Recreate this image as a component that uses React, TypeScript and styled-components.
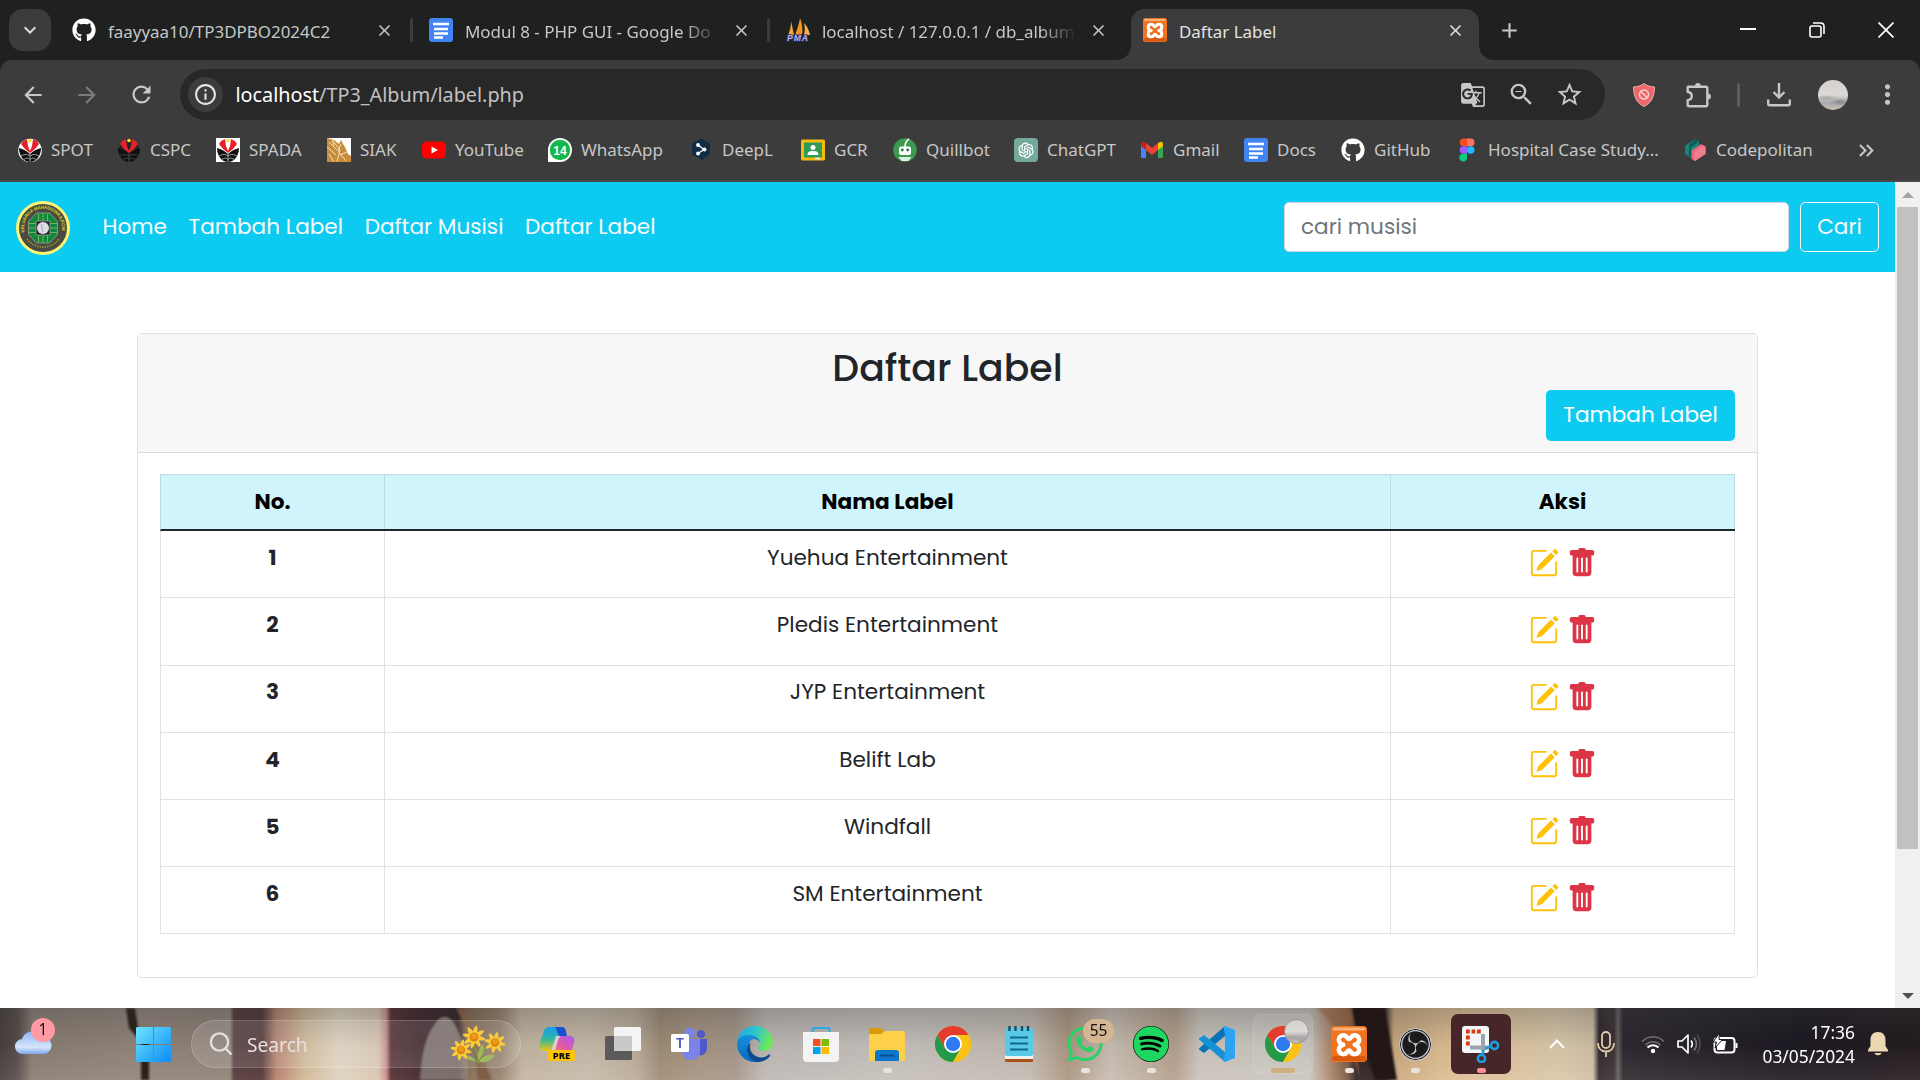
import React from 'react';
import styled, { createGlobalStyle, css } from 'styled-components';
import {
  MdAdd,
  MdArrowBack,
  MdArrowForward,
  MdClose,
  MdGTranslate,
  MdInfoOutline,
  MdKeyboardArrowDown,
  MdKeyboardDoubleArrowRight,
  MdMoreVert,
  MdOutlineZoomOut,
  MdRefresh,
  MdStarOutline,
} from 'react-icons/md';
import { FaGithub, FaWhatsapp, FaSpotify } from 'react-icons/fa';
import { BsPencilSquare, BsTrashFill } from 'react-icons/bs';
import { SiObsstudio } from 'react-icons/si';
import { AiOutlineOpenAI } from 'react-icons/ai';

const UI_FONT = '"Noto Sans", "Open Sans", sans-serif';
const PAGE_FONT = 'Poppins, Inter, sans-serif';

const GlobalStyle = createGlobalStyle`
  * { box-sizing: border-box; }
  body { margin: 0; background: #fff; font-family: ${UI_FONT}; overflow: hidden; }
  svg { display: block; flex: none; }
`;

const Screen = styled.div`
  width: 1920px;
  height: 1080px;
  display: flex;
  flex-direction: column;
  overflow: hidden;
`;

/* ---------- browser chrome ---------- */

const TabStrip = styled.header`
  height: 60px;
  flex: none;
  display: flex;
  align-items: center;
  background: #1f2120;
`;

const TabSearch = styled.button`
  width: 42px;
  height: 42px;
  margin: 0 9px;
  padding: 0;
  border: 0;
  border-radius: 14px;
  background: #3c3c3c;
  color: #dcdcdc;
  display: grid;
  place-items: center;
`;

const Tab = styled.div<{ $active?: boolean }>`
  width: ${(p) => (p.$active ? 348 : 357)}px;
  height: 51px;
  flex: none;
  margin-top: 9px;
  padding: 0 0 9px 12px;
  display: flex;
  align-items: center;
  position: relative;
  font-size: 16.95px;
  color: ${(p) => (p.$active ? '#e3e3e3' : '#c7c7c7')};
  ${(p) =>
    p.$active &&
    css`
      background: #3c3c3c;
      border-radius: 14px 14px 0 0;
      &::before,
      &::after {
        content: '';
        position: absolute;
        bottom: 0;
        width: 14px;
        height: 14px;
      }
      &::before {
        left: -14px;
        background: radial-gradient(circle at 0 0, transparent 13.5px, #3c3c3c 14px);
      }
      &::after {
        right: -14px;
        background: radial-gradient(circle at 100% 0, transparent 13.5px, #3c3c3c 14px);
      }
    `}
`;

const TabTitle = styled.span<{ $fade?: boolean }>`
  width: 252px;
  flex: none;
  margin-left: 12px;
  padding-top: 2px;
  overflow: hidden;
  white-space: nowrap;
  ${(p) =>
    p.$fade &&
    css`
      mask-image: linear-gradient(90deg, #000 218px, transparent 254px);
    `}
`;

const TabClose = styled.span`
  width: 48px;
  flex: none;
  display: grid;
  place-items: center;
`;

const TabDivider = styled.span`
  width: 3px;
  height: 24px;
  margin-left: 2px;
  border-radius: 2px;
  background: #3c3c3c;
`;

const NewTab = styled.span`
  width: 60px;
  display: grid;
  place-items: center;
  color: #c7c7c7;
`;

const WindowControls = styled.div`
  display: flex;
  margin-left: auto;
  color: #fff;
`;

const WindowButton = styled.span`
  width: 69px;
  height: 60px;
  display: grid;
  place-items: center;
`;

const ToolbarBack = styled.div`
  background: #1f2120;
  flex: none;
`;

const Toolbar = styled.div`
  height: 60px;
  padding: 9px 0 0 6px;
  display: flex;
  align-items: flex-start;
  background: #3c3c3c;
  border-radius: 12px 12px 0 0;
  color: #c7c7c7;
`;

const ToolButton = styled.span<{ $w: number; $dim?: boolean }>`
  width: ${(p) => p.$w}px;
  height: 51px;
  display: grid;
  place-items: center;
  flex: none;
  color: ${(p) => (p.$dim ? '#7b7b7b' : 'inherit')};
`;

const Omnibox = styled.div`
  width: 1425px;
  height: 51px;
  flex: none;
  margin-left: 12px;
  padding: 0 12px 0 8px;
  border-radius: 26px;
  background: #282828;
  display: flex;
  align-items: center;
`;

const SiteInfo = styled.span`
  width: 35px;
  height: 35px;
  border-radius: 50%;
  background: #3c3c3c;
  display: grid;
  place-items: center;
`;

const Url = styled.span`
  flex: 1;
  margin-left: 12.5px;
  font-size: 19.8px;
  color: #c2c2c2;
  b {
    font-weight: 400;
    color: #fff;
  }
`;

const ToolDivider = styled.span`
  width: 3px;
  height: 24px;
  flex: none;
  margin: 14px 0 0 22px;
  border-radius: 2px;
  background: #5c5c5c;
`;

const Bookmarks = styled.nav`
  height: 62px;
  padding-left: 18px;
  display: flex;
  align-items: center;
  background: #3c3c3c;
  border-bottom: 2px solid #484848;
  color: #c7c7c7;
  font-size: 17px;
`;

const Bookmark = styled.div<{ $w: number }>`
  width: ${(p) => p.$w}px;
  display: flex;
  align-items: center;
  gap: 9px;
  white-space: nowrap;
  flex: none;
`;

const BookmarkLabel = styled.span`
  padding-bottom: 2px;
`;

/* ---------- page ---------- */

const Viewport = styled.main`
  height: 826px;
  flex: none;
  display: flex;
  background: #fff;
`;

const Page = styled.div`
  width: 1895px;
  font-family: ${PAGE_FONT};
  font-size: 21.6px;
  color: #212529;
`;

const Navbar = styled.div`
  height: 90px;
  padding: 0 16px;
  display: flex;
  align-items: center;
  background: #0dcaf0;
`;

const Brand = styled.span`
  padding-top: 2px;
`;

const NavLinks = styled.div`
  display: flex;
  gap: 21.6px;
  margin: 0 auto 0 32.5px;
  padding-bottom: 1px;
  color: #f8f9fa;
`;

const SearchField = styled.div`
  width: 505px;
  height: 50px;
  padding: 0 16px 2px;
  border: 1px solid #ced4da;
  border-radius: 5px;
  background: #fff;
  color: #6c757d;
  display: flex;
  align-items: center;
`;

const SearchButton = styled.button`
  width: 79px;
  height: 50px;
  margin-left: 11px;
  padding: 0 0 2px;
  border: 1px solid #f8f9fa;
  border-radius: 5px;
  background: transparent;
  color: #f8f9fa;
  font: inherit;
`;

const Card = styled.section`
  width: 1621px;
  height: 645px;
  margin: 61px 0 0 137px;
  border: 1px solid #dfdfdf;
  border-radius: 5px;
`;

const CardHead = styled.div`
  height: 119px;
  padding: 9px 22px 0;
  display: flex;
  flex-direction: column;
  align-items: center;
  background: #f7f7f7;
  border-bottom: 1px solid #d8d9da;
  border-radius: 4px 4px 0 0;
`;

const Title = styled.h1`
  margin: 0;
  height: 47px;
  line-height: 50px;
  font-size: 37.8px;
  font-weight: 500;
`;

const AddButton = styled.button`
  width: 189px;
  height: 51px;
  align-self: flex-end;
  padding: 0 0 3px;
  border: 0;
  border-radius: 5px;
  background: #0dcaf0;
  color: #fff;
  font: inherit;
`;

const Table = styled.div`
  margin: 21px 22px 0;
  border-left: 1px solid #dee2e6;
  text-align: center;
`;

const HeadRow = styled.div`
  height: 57px;
  display: grid;
  grid-template-columns: 224px 1006px 344px;
  background: #cff4fc;
  border-top: 1px solid #badce3;
  border-bottom: 2px solid #212529;
  border-left: 1px solid #badce3;
  margin-left: -1px;
  color: #000;
  font-weight: 700;
`;

const HeadCell = styled.div`
  border-right: 1px solid #badce3;
  line-height: 53px;
`;

const Row = styled.div<{ $h: number; $line: number }>`
  height: ${(p) => p.$h}px;
  line-height: ${(p) => p.$line}px;
  display: grid;
  grid-template-columns: 224px 1006px 344px;
  border-bottom: 1px solid #dee2e6;
`;

const Cell = styled.div<{ $bold?: boolean }>`
  border-right: 1px solid #dee2e6;
  font-weight: ${(p) => (p.$bold ? 700 : 400)};
`;

const ActionCell = styled.div<{ $top: number }>`
  border-right: 1px solid #dee2e6;
  padding-top: ${(p) => p.$top}px;
  display: flex;
  justify-content: center;
  gap: 8px;
`;

const Scrollbar = styled.div`
  width: 25px;
  padding: 10px 2px 9px;
  display: flex;
  flex-direction: column;
  align-items: center;
  background: #f0f0f0;
`;

const Thumb = styled.div`
  width: 21px;
  height: 642px;
  margin-top: 9px;
  background: #c1c1c1;
`;

const Arrow = styled.span<{ $down?: boolean }>`
  border: 6.5px solid transparent;
  ${(p) =>
    p.$down
      ? css`
          margin-top: auto;
          border-top: 6px solid #505050;
          border-bottom: 0;
        `
      : css`
          border-bottom: 6px solid #a3a3a3;
          border-top: 0;
        `}
`;

/* ---------- taskbar ---------- */

const Taskbar = styled.footer`
  height: 72px;
  flex: none;
  display: flex;
  align-items: center;
  position: relative;
  color: #fff;
  background: linear-gradient(rgba(70, 70, 70, 0.32), rgba(120, 115, 110, 0.08) 50%, rgba(255, 240, 230, 0.12)),
    linear-gradient(
      90deg,
      #403838 0, #514745 18px, #85796f 32px, #8c8076 125px, #8a7d73 230px,
      #4b3032 234px, #4a2d2e 262px, #b27b68 276px, #d0b794 305px, #ded3c0 340px,
      #d8c4ae 378px, #c98d87 386px, #4b262c 391px, #351d23 420px, #2b191d 458px,
      #7c6248 466px, #917c68 500px, #c0b39f 522px, #c4b9a8 590px, #b8aa98 636px,
      #9a8872 660px, #a3927e 700px, #a19385 735px, #bbb7b4 765px, #c4bfba 900px,
      #c0b8b0 1030px, #a8937d 1068px, #c6bcb1 1110px, #b09c88 1175px, #c9c4bc 1200px,
      #c6c3be 1310px, #a98468 1330px, #74513d 1348px, #241818 1356px, #241a1a 1384px,
      #c9a67c 1394px, #dcbc90 1450px, #d8c7a8 1560px, #cdbda3 1593px, #29212a 1599px,
      #332a2e 1614px, #625a5c 1618px, #252029 1623px, #1d1922 1710px, #15111b 1800px, #1b1318 1920px
    );
`;

const Wallpaper = styled.svg`
  position: absolute;
  inset: 0;
`;

const Weather = styled.div`
  width: 136px;
  flex: none;
  margin-bottom: 4px;
  padding-left: 15px;
  position: relative;
`;

const CountBadge = styled.span<{ $x: number; $y: number; $w: number; $bg: string }>`
  position: absolute;
  left: ${(p) => p.$x}px;
  top: ${(p) => p.$y}px;
  width: ${(p) => p.$w}px;
  height: 24px;
  border-radius: 12px;
  background: ${(p) => p.$bg};
  color: #111;
  font-size: 15.5px;
  line-height: 23px;
  text-align: center;
`;

const StartButton = styled.div`
  width: 35px;
  flex: none;
  position: relative;
`;

const SearchPill = styled.div`
  width: 330px;
  height: 48px;
  flex: none;
  margin: 0 3px 0 20px;
  padding: 0 13px 0 17px;
  display: flex;
  align-items: center;
  position: relative;
  border-radius: 24px;
  background: rgba(255, 255, 255, 0.12);
  border: 1px solid rgba(255, 255, 255, 0.16);
  font-size: 19.2px;
  color: #e6e2df;
`;

const PillLabel = styled.span`
  margin: 0 auto 0 14px;
`;

const AppSlot = styled.div`
  width: 66px;
  height: 72px;
  flex: none;
  display: grid;
  place-items: center;
  position: relative;
`;

const AppTile = styled.div<{ $bg?: string; $edge?: string }>`
  width: 60px;
  height: 60px;
  border-radius: 7px;
  border: 1px solid ${(p) => p.$edge ?? 'transparent'};
  background: ${(p) => p.$bg ?? 'transparent'};
  display: grid;
  place-items: center;
`;

const Indicator = styled.span<{ $w: number; $c: string }>`
  position: absolute;
  bottom: 7px;
  left: calc(50% - ${(p) => p.$w / 2}px);
  width: ${(p) => p.$w}px;
  height: 5px;
  border-radius: 3px;
  background: ${(p) => p.$c};
`;

const Tray = styled.div`
  display: flex;
  align-items: center;
  position: relative;
`;

const TrayItem = styled.span<{ $gap: number }>`
  margin-left: ${(p) => p.$gap}px;
`;

const Clock = styled.div`
  width: 106px;
  margin-left: 11px;
  text-align: right;
  font-size: 17.4px;
  line-height: 24.5px;
`;

/* ---------- drawings ---------- */

const DocsIcon = () => (
  <svg width="24" height="24" viewBox="0 0 24 24">
    <rect width="24" height="24" rx="3" fill="#4384f4" />
    <path d="M4 6h16M5 11h14M5 15.5h14M5 19.5h9" stroke="#fff" strokeWidth="2.4" />
  </svg>
);

const XamppIcon = ({ s = 24 }: { s?: number }) => (
  <svg width={s} height={s} viewBox="0 0 24 24">
    <rect width="24" height="24" rx="2.5" fill="#f0741f" />
    <rect x="1" y="1" width="22" height="2" rx="1" fill="#f9b27c" />
    <rect x=".7" y="20" width="22.6" height="3.4" rx="1.5" fill="#d9590f" />
    <path
      d="M8.2 12.5c-4-.6-4-6.300 0-6.300 2.600 0 2.300 2.500 3.800 2.500s1.200-2.500 3.800-2.500c4 0 4 5.700 0 6.300 4 .6 4 6.300 0 6.300-2.600 0-2.300-2.500-3.800-2.500s-1.200 2.500-3.800 2.500c-4 0-4-5.700 0-6.300z"
      fill="none"
      stroke="#fff"
      strokeWidth="3"
      strokeLinejoin="round"
    />
  </svg>
);

const PmaText = styled.text`
  font: italic 700 8.6px 'Liberation Sans', sans-serif;
  paint-order: stroke;
`;

const PmaIcon = () => (
  <svg width="24" height="24" viewBox="0 0 24 24">
    <path d="M5 3 8 17H2C4 13 5 8 5 3z" fill="#f5a53a" />
    <path d="M14 0c-1 6-3 12-5 17h7C17 11 16 5 14 0z" fill="#f39422" />
    <path d="M18 5c1 4 1 8 0 12h6c-1-5-3-9-6-12z" fill="#f7b04d" />
    <PmaText x="1" y="23" fill="#b4b4e2" stroke="#2b2b72" strokeWidth="1.600" textLength="21">PMA</PmaText>
  </svg>
);

const CrestIcon = ({ kind }: { kind: 'spot' | 'cspc' | 'spada' }) => (
  <svg width="24" height="24" viewBox="0 0 24 24">
    {kind === 'spada' && <rect width="24" height="24" fill="#fff" />}
    <circle cx="12" cy="12.500" r={kind === 'cspc' ? 10.5 : 11.8} fill={kind === 'cspc' ? '#262626' : '#fff'} />
    <path d="M3 6C6 1 10 1 10 1l2 3 2-3s4 0 7 5l-4 5-5 4-5-4z" fill="#e8202a" />
    <path d="M9 1h6l-1 7-2 5-2-5z" fill={kind === 'cspc' ? '#262626' : '#fff'} />
    <circle cx="12" cy="2.500" r="1.800" fill="#f4e52a" />
    <path d="M1 10c4 1 8 3 11 6 3-3 7-5 11-6 0 8-5 14-11 14S1 18 1 10z" fill="#111" />
    <path d="M12 15v9M3 18c4-2 6-2 9 0 3-2 5-2 9 0M6 21.500c3-2 4-1.500 6 0 2-1.500 3-2 6 0" stroke={kind === 'cspc' ? '#4a4a4a' : '#aaa'} fill="none" strokeWidth=".9" />
  </svg>
);

const SiakIcon = () => (
  <svg width="24" height="24" viewBox="0 0 24 24">
    <rect width="24" height="24" fill="#fff" />
    <path d="M0 0l7 2 5 4 2-4 2 4 2 3 3 7 3 2v6H0z" fill="#c78d3a" />
    <path d="M2 4l8 8M0 9l9 8M6 3l7 9-3 12M14 6l-3 7 8 10M20 14l-7 3M2 16l5 8M5 0l2 8" stroke="#f3dfbb" fill="none" strokeWidth="1" />
  </svg>
);

const YoutubeIcon = () => (
  <svg width="24" height="24" viewBox="0 0 24 24">
    <rect y="3.500" width="24" height="17" rx="4.500" fill="#f00" />
    <path d="M9.500 8.500v7l6.500-3.500z" fill="#fff" />
  </svg>
);

const WaBadgeIcon = () => (
  <svg width="24" height="24" viewBox="0 0 24 24">
    <path d="M0 24V12A12 12 0 1 1 12 24z" fill="#fff" />
    <circle cx="12" cy="12" r="10.200" fill="#12b84a" />
    <text x="12" y="16.500" textAnchor="middle" fontFamily="Liberation Sans" fontSize="12" fontWeight="700" fill="#fff">14</text>
  </svg>
);

const DeeplIcon = () => (
  <svg width="24" height="24" viewBox="0 0 24 24">
    <path d="M12 .5l9 5v11l-5 3-4 3.500v-2l-9-4.500v-11z" fill="#0f2b46" />
    <path d="M9 7l6 4.500-6 4" stroke="#fff" strokeWidth="1.300" fill="none" />
    <circle cx="9" cy="7" r="1.900" fill="#fff" />
    <circle cx="15.500" cy="11.500" r="1.900" fill="#fff" />
    <circle cx="9" cy="15.500" r="1.900" fill="#fff" />
  </svg>
);

const ClassroomIcon = () => (
  <svg width="24" height="24" viewBox="0 0 24 24">
    <rect y="1.500" width="24" height="21" rx="1.500" fill="#f8bb0c" />
    <rect x="3" y="4.500" width="18" height="15" fill="#2f9b57" />
    <circle cx="12" cy="9.500" r="2.500" fill="#fff" />
    <path d="M6.500 17c0-3.500 2.500-4 5.500-4s5.500.5 5.500 4z" fill="#fff" />
    <path d="M14 19.500h5v2h-5z" fill="#dfe6e0" />
  </svg>
);

const QuillbotIcon = () => (
  <svg width="24" height="24" viewBox="0 0 24 24">
    <circle cx="12" cy="12" r="11.800" fill="#3d9950" />
    <path d="M12 9c0-4 1-6 4-8" stroke="#fff" strokeWidth="1.600" fill="none" />
    <rect x="6" y="8.500" width="12" height="8.500" rx="2" fill="#fff" />
    <circle cx="9.300" cy="12" r="1.400" fill="#2d7a3e" />
    <circle cx="14.700" cy="12" r="1.400" fill="#2d7a3e" />
    <path d="M5.500 19h13l-3 4h-7z" fill="#dff0e2" />
  </svg>
);

const ChatGptTile = styled.span`
  width: 24px;
  height: 24px;
  border-radius: 4px;
  background: #74aa9c;
  color: #fff;
  display: grid;
  place-items: center;
`;

const GmailIcon = () => (
  <svg width="24" height="24" viewBox="0 0 24 24">
    <path d="M1 20V6l5 4v10z" fill="#4285f4" />
    <path d="M18 20V10l5-4v14z" fill="#34a853" />
    <path d="M6 12V5l6 5 6-5v7l-6 5z" fill="#ea4335" />
    <path d="M1 8V6c0-2.200 2.500-2.800 4-1.500L6 5.300V12z" fill="#c5221f" />
    <path d="M23 8V6c0-2.200-2.500-2.800-4-1.500l-1 .8V12z" fill="#fbbc04" />
  </svg>
);

const FigmaIcon = () => (
  <svg width="24" height="24" viewBox="0 0 24 24">
    <path d="M8.500 .6H12v7.600H8.500a3.800 3.800 0 0 1 0-7.600z" fill="#f24e1e" />
    <path d="M12 .6h3.700a3.800 3.800 0 0 1 0 7.600H12z" fill="#ff7262" />
    <path d="M8.500 8.200H12v7.600H8.500a3.800 3.800 0 0 1 0-7.600z" fill="#a259ff" />
    <circle cx="15.700" cy="12" r="3.800" fill="#1abcfe" />
    <path d="M8.500 15.800H12v4a3.800 3.800 0 1 1-3.500-4z" fill="#0acf83" />
  </svg>
);

const CodepolitanIcon = () => (
  <svg width="24" height="24" viewBox="0 0 24 24">
    <path d="M12 1l4 2.500v5L10 12v7l-2 1-6-4V8z" fill="#1a8577" />
    <path d="M12 1l4 2.500-8 6V20l-2-1.500V7z" fill="#0d5f55" />
    <path d="M8.500 12.500L18 6l4.500 2.500v7.500L12 23l-3.500-2z" fill="#e9667a" />
    <path d="M11 14.500l9-7 2.500 1v7.500L12 23l-1-1z" fill="#f07c8c" />
  </svg>
);

const ShieldIcon = () => (
  <svg width="26" height="26" viewBox="0 0 26 26">
    <path d="M13 1.500c3 2.500 6 3 10.500 3.500 0 9-3 16-10.500 19.500C5.500 21 2.500 14 2.500 5 7 4.500 10 4 13 1.500z" fill="#f0666a" stroke="#e8b0b0" />
    <circle cx="13" cy="12.500" r="4.500" fill="none" stroke="#f6d5d5" strokeWidth="1.500" />
    <path d="M10 9.500l6 6" stroke="#f6d5d5" strokeWidth="1.500" />
  </svg>
);

const PuzzleIcon = () => (
  <svg width="26" height="26" viewBox="0 0 26 26" fill="none" stroke="currentColor" strokeWidth="2.400" strokeLinejoin="round">
    <path d="M2.200 4.700h17.600q1.500 0 1.500 1.500v16.600q0 1.500-1.500 1.500H3.200q-1.500 0-1.500-1.500v-4.600c5.400-.4 5.400-7.800 0-8.200V5.200z" />
    <path d="M9 4a2.900 2.900 0 0 1 5.800 0zM22 11.500a2.900 2.900 0 0 1 0 5.800z" fill="currentColor" stroke="none" />
  </svg>
);

const DownloadIcon = () => (
  <svg width="26" height="26" viewBox="0 0 26 26" fill="none" stroke="currentColor" strokeWidth="2.400">
    <path d="M13 1v14M7.500 10l5.500 5.500L18.500 10M2.200 17.500v4.300q0 1.500 1.500 1.500h18.600q1.500 0 1.500-1.500v-4.300" />
  </svg>
);

const Avatar = styled.span`
  width: 30px;
  height: 30px;
  border-radius: 50%;
  background: radial-gradient(ellipse 12px 3px at 9px 18px, #a6a3a5, transparent),
    radial-gradient(ellipse 10px 4px at 22px 22px, #86868f, transparent),
    linear-gradient(#d3d1d0 0, #dcd9d5 50%, #c4c1c0 62%, #a9a8ad 76%, #c9c1b4 100%);
`;

const SmallAvatar = styled(Avatar)`
  position: absolute;
  left: 34px;
  top: 11px;
  width: 25px;
  height: 25px;
  border: 1px solid #989898;
`;

const CampusLogo = () => (
  <svg width="54" height="54" viewBox="0 0 54 54">
    <defs>
      <path id="ringTop" d="M9 33a19 19 0 1 1 36 0" />
    </defs>
    <circle cx="27" cy="27" r="27" fill="#fdf573" />
    <circle cx="27" cy="27" r="24" fill="#4a4a42" />
    <text fontFamily="Liberation Sans" fontSize="4.600" fontWeight="700" fill="#d8cc20">
      <textPath href="#ringTop" startOffset="2" textLength="66">KELUARGA MAHASISWA ILKOM</textPath>
    </text>
    <path d="M11 38a20 20 0 0 0 32 0" fill="none" stroke="#8f8a30" strokeWidth="2" strokeDasharray="1.500 1" />
    <path d="M20.500 12h13l8 8.500v13l-8 8.500h-13l-8-8.500v-13z" fill="#0f8a3c" stroke="#9aa79a" strokeWidth=".8" />
    <path d="M22.500 13v28M27 12v30M31.500 13v28M13 22.500h28M12.500 27h29M13 31.500h28" stroke="#8fae5c" strokeWidth=".9" />
    <rect x="20" y="20" width="14" height="14" fill="#1f2a22" stroke="#9a9a9a" strokeWidth=".8" />
    <circle cx="27" cy="27" r="6" fill="#dcdce2" />
    <path d="M25 23c2 2 0 4 2 8" stroke="#a0a0aa" fill="none" />
  </svg>
);

const ChromeIcon = () => (
  <svg width="36" height="36" viewBox="0 0 48 48">
    <circle cx="24" cy="24" r="24" fill="#fbc116" />
    <path d="M3.200 12A24 24 0 0 1 44.800 12H24L13.600 30z" fill="#e33b2e" />
    <path d="M3.200 12A24 24 0 0 0 24 48L34.400 30 24 24 13.600 30z" fill="#249a48" />
    <path d="M44.800 12H24v12l10.400 6L24 48A24 24 0 0 0 44.800 12z" fill="#fbc116" />
    <circle cx="24" cy="24" r="12" fill="#fff" />
    <circle cx="24" cy="24" r="9.600" fill="#2f7af0" />
  </svg>
);

const WindowsIcon = () => (
  <svg width="35" height="35" viewBox="0 0 35 35">
    <defs>
      <linearGradient id="win" x1="0" y1="0" x2="1" y2="1" gradientUnits="objectBoundingBox">
        <stop offset="0" stopColor="#6fe4fd" />
        <stop offset="1" stopColor="#0a8cf5" />
      </linearGradient>
    </defs>
    <path d="M1 0h16v17H0V1zM18 0h16l1 1v16H18zM0 18h17v17H1l-1-1zM18 18h17v16l-1 1H18z" fill="url(#win)" />
  </svg>
);

const CloudIcon = () => (
  <svg width="37" height="24" viewBox="0 0 37 24">
    <defs>
      <linearGradient id="cl" x1="0" y1="0" x2="0" y2="1">
        <stop offset="0" stopColor="#8db4f5" />
        <stop offset=".7" stopColor="#d7e5fc" />
        <stop offset="1" stopColor="#7fa6ee" />
      </linearGradient>
    </defs>
    <path d="M8 24a7.500 7.500 0 0 1-1-15A11 11 0 0 1 27 7a8.500 8.500 0 0 1 2 17z" fill="url(#cl)" />
  </svg>
);

const Daisy = ({ x, y, s }: { x: number; y: number; s: number }) => (
  <g transform={`translate(${x} ${y}) scale(${s})`}>
    {[0, 45, 90, 135].map((a) => (
      <ellipse key={a} rx="11" ry="2.500" fill="#fccb3c" transform={`rotate(${a + 12})`} />
    ))}
    <circle r="4.300" fill="#d9820f" />
    <circle r="2.800" cy="-.8" fill="#f09a1c" />
  </g>
);

const FlowersIcon = () => (
  <svg width="58" height="38" viewBox="0 0 58 38">
    <path d="M30 37c-1-10-4-14-7-20M30 37c1-9 8-14 14-20M30 37c-6-1-12-4-16-9" stroke="#7d9c3f" strokeWidth="1.800" fill="none" />
    <path d="M30 37c2-5 8-8 16-7-3 6-10 8-16 7zM29 35c-1-7 2-13 5-16 2 6 0 12-5 16zM27 36c-6 0-9-2-11-5 5-1 9 2 11 5z" fill="#9dbb5c" />
    <Daisy x={12} y={25} s={0.98} />
    <Daisy x={25} y={12} s={1.05} />
    <Daisy x={46} y={17.5} s={0.98} />
  </svg>
);

const CopilotIcon = () => (
  <svg width="36" height="36" viewBox="0 0 36 36">
    <defs>
      <linearGradient id="cpa" x1="0" y1="0" x2="0" y2="1">
        <stop offset="0" stopColor="#1c9bf0" />
        <stop offset=".5" stopColor="#2cb9a0" />
        <stop offset="1" stopColor="#f2c511" />
      </linearGradient>
      <linearGradient id="cpb" x1="1" y1="0" x2="0" y2="1">
        <stop offset="0" stopColor="#a25bf5" />
        <stop offset=".6" stopColor="#e85a9b" />
        <stop offset="1" stopColor="#fb8a5a" />
      </linearGradient>
    </defs>
    <path d="M10 1h12c3 0 4 3 5 8l-8 2-5 14H6c-5 0-6-3-5-8L5 5c1-3 3-4 5-4z" fill="url(#cpa)" />
    <path d="M16 1h7c3 0 4 3 5 9h-7c-2 0-3-7-5-9z" fill="#1a4fd0" />
    <path d="M21 10h9c5 0 6 3 5 7l-3 10H12c3-1 4-4 5-9 1-4 2-8 4-8z" fill="url(#cpb)" />
    <path d="M17 10h5c-2 1-3 4-4 8l-2 7h-4l3-9z" fill="#d9cfd0" />
    <rect x="9" y="24" width="27" height="11" rx="2" fill="#ffc40a" />
    <text x="22.500" y="33" textAnchor="middle" fontFamily="Noto Sans" fontSize="9.500" fontWeight="800" fill="#000">PRE</text>
  </svg>
);

const TaskViewIcon = () => (
  <svg width="36" height="36" viewBox="0 0 36 36">
    <rect y="10" width="27" height="24" rx="1.500" fill="#5a5a5a" />
    <rect x="9" y="1" width="27" height="24" rx="1.500" fill="#f4f4f4" />
    <path d="M9 10h18v15H9z" fill="#c9c9c9" />
  </svg>
);

const TeamsIcon = () => (
  <svg width="36" height="36" viewBox="0 0 36 36">
    <circle cx="30" cy="8" r="4" fill="#5059c9" />
    <path d="M22 13h14v10a7 7 0 0 1-9 6z" fill="#5059c9" />
    <circle cx="19" cy="7" r="5.500" fill="#7b83eb" />
    <path d="M11 13h18v12c0 12-18 12-18 0z" fill="#7b83eb" />
    <rect y="8" width="18" height="18" rx="1.500" fill="#fff" />
    <text x="9" y="22" textAnchor="middle" fontFamily="Noto Sans" fontSize="14" fontWeight="600" fill="#4b53bc">T</text>
  </svg>
);

const EdgeIcon = () => (
  <svg width="36" height="36" viewBox="0 0 36 36">
    <defs>
      <linearGradient id="ea" x1="0" y1="0" x2="1" y2=".3">
        <stop offset="0" stopColor="#1ba0e8" />
        <stop offset=".5" stopColor="#2bc3d2" />
        <stop offset="1" stopColor="#6ee75a" />
      </linearGradient>
      <linearGradient id="eb" x1="0" y1="0" x2="0" y2="1">
        <stop offset="0" stopColor="#1590dc" />
        <stop offset="1" stopColor="#0c68c4" />
      </linearGradient>
    </defs>
    <path d="M0 17C1 7 8 0 18 0c11 0 18 8 18 16 0 6-4 9-9 9-4 0-6-1-6-3 0-1 2-2 2-5 0-4-4-7-9-7C7 10 1 13 0 17z" fill="url(#ea)" />
    <path d="M0 18C0 12 6 9 12 9c6 0 11 3 11 8 0 0-2-4-6-4s-5 4-5 8c0 7 5 13 12 14-2 1-4 1-6 1C8 36 0 28 0 18z" fill="url(#eb)" />
    <path d="M14 17c-2 3-1 8 2 11 4 4 10 5 15 1 1-1 3 0 2 1-3 4-8 6-13 6-7-2-10-8-10-13 0-3 2-5 4-6z" fill="#114a8b" />
  </svg>
);

const StoreIcon = () => (
  <svg width="36" height="36" viewBox="0 0 36 36">
    <path d="M9.500 8V3.500Q9.500 2 11 2h14q1.500 0 1.500 1.500V8" fill="none" stroke="#29a9e8" strokeWidth="2" />
    <path d="M0 6h36v26q0 4-4 4H4q-4 0-4-4z" fill="#f3f3f3" />
    <path d="M10 13h7.500v7H10z" fill="#f25022" />
    <path d="M18.500 13H26v7h-7.500z" fill="#7fba00" />
    <path d="M10 21h7.500v7H10z" fill="#00a4ef" />
    <path d="M18.500 21H26v7h-7.500z" fill="#ffb900" />
  </svg>
);

const ExplorerIcon = () => (
  <svg width="36" height="36" viewBox="0 0 36 36">
    <path d="M0 3q0-1 1-1h11l4 4-4 4H0z" fill="#d99a07" />
    <path d="M0 8h12l4-3h19q1 0 1 1v28q0 1-1 1H1q-1 0-1-1z" fill="#fdd04a" />
    <path d="M6 35v-8q0-3 3-3h18q3 0 3 3v8z" fill="#0d76c8" />
    <path d="M11 29.500h14" stroke="#0a4f94" strokeWidth="2" />
  </svg>
);

const NotepadIcon = () => (
  <svg width="36" height="36" viewBox="0 0 36 36">
    <path d="M4 33h28v2q0 1-1 1H5q-1 0-1-1z" fill="#a9521a" />
    <path d="M4 29h28v4H4z" fill="#f1f1f1" />
    <rect x="4" y="2" width="28" height="28" rx="2" fill="#59c9e4" />
    <path d="M8.500 0v5M14.500 0v5M21 0v5M27 0v5" stroke="#124f6a" strokeWidth="2.400" />
    <path d="M9 11.500h18M9 17.500h18M9 23.500h18" stroke="#0f6a8f" strokeWidth="2" />
  </svg>
);

const VscodeIcon = () => (
  <svg width="36" height="36" viewBox="0 0 36 36">
    <path d="M26 0v10L5 27 0 23.500v-1z" fill="#0a73b8" />
    <path d="M26 36V26L5 9 0 12.500v1z" fill="#1591d6" />
    <path d="M26 0l10 4v28l-10 4q-1 .3-1.500-.5L26 27V9L24.500.5Q25-.3 26 0z" fill="#2ba5f2" />
  </svg>
);

const SnipIcon = () => (
  <svg width="38" height="37" viewBox="0 0 38 37">
    <rect width="27" height="27" rx="3" fill="#f4f6f8" />
    <path d="M4 5.500h3.800M9.500 5.500h3.800M15 5.500h3.800M4 11.500h3.800M4 17.500h3.800" stroke="#d83b12" strokeWidth="4" />
    <path d="M21 8v17M8 21.500h19" stroke="#9aa5ae" strokeWidth="4" />
    <circle cx="32.500" cy="19.500" r="3.600" fill="none" stroke="#1f9be0" strokeWidth="2.600" />
    <circle cx="19.500" cy="32.500" r="3.600" fill="none" stroke="#1f9be0" strokeWidth="2.600" />
    <path d="M29 20.500l-6 2M20.500 29l1-5" stroke="#1f9be0" strokeWidth="2.600" />
  </svg>
);

const ObsTile = styled.span`
  width: 33px;
  height: 33px;
  border-radius: 50%;
  background: #1b1b1d;
  border: 1.5px solid #d8d8d8;
  color: #c9c9cb;
  display: grid;
  place-items: center;
`;

const SpotifyTile = styled.span`
  width: 36px;
  height: 36px;
  border-radius: 50%;
  background: #000;
  color: #1ed760;
`;

const MagnifierIcon = () => (
  <svg width="24" height="24" viewBox="0 0 24 24" fill="none" stroke="#e4e0dd" strokeWidth="2.400">
    <circle cx="10.500" cy="10" r="8.600" />
    <path d="M16.500 16.500l6 6" />
  </svg>
);

const MicIcon = () => (
  <svg width="18" height="26" viewBox="0 0 18 26" fill="none" stroke="#e2cba5" strokeWidth="1.800">
    <rect x="5" y="1" width="8" height="16" rx="4" />
    <path d="M1 12c0 5 3 8.500 8 8.500s8-3.500 8-8.500M9 20.500V26" />
  </svg>
);

const WifiIcon = () => (
  <svg width="24" height="20" viewBox="0 0 24 20" fill="none" strokeWidth="1.800">
    <path d="M1 7.500a15.500 15.500 0 0 1 22 0M4.500 11a10.500 10.500 0 0 1 15 0" stroke="#67616a" />
    <path d="M6.500 13.500a7.800 7.800 0 0 1 11 0" stroke="#fff" strokeWidth="2.200" />
    <circle cx="12" cy="17" r="2.200" fill="#fff" />
  </svg>
);

const VolumeIcon = () => (
  <svg width="24" height="22" viewBox="0 0 24 22" fill="none" stroke="#fff" strokeWidth="1.700">
    <path d="M1 8h4l6-6v18l-6-6H1z" strokeLinejoin="round" />
    <path d="M14 7.500c1.500 2 1.500 5 0 7" />
    <path d="M17 4.500c3 4 3 9 0 13" stroke="#77727a" />
    <path d="M20 2c4 5 4 13 0 18" stroke="#4b464f" />
  </svg>
);

const BatteryIcon = () => (
  <svg width="25" height="22" viewBox="0 0 25 22">
    <rect x="1.500" y="5" width="20" height="14.500" rx="3" fill="none" stroke="#fff" strokeWidth="2" />
    <path d="M22.500 10h2v5h-2zM4 8h9l-1.500 9H4z" fill="#fff" />
    <path d="M6.500 0L0 9h3.500L2 15l7.500-8.500H6z" fill="#fff" stroke="#1d1922" strokeWidth="1" />
  </svg>
);

const BellIcon = () => (
  <svg width="20" height="24" viewBox="0 0 20 24" fill="#ecd9b4">
    <path d="M10 0c-5 0-7.500 3.500-7.500 8v6L0 18v1.500h20V18l-2.500-4V8C17.500 3.500 15 0 10 0zM6.500 21h7c-1 3-6 3-7 0z" />
  </svg>
);

/* ---------- data ---------- */

const bookmarks: { label: string; w: number; icon: React.ReactNode }[] = [
  { label: 'SPOT', w: 99, icon: <CrestIcon kind="spot" /> },
  { label: 'CSPC', w: 99, icon: <CrestIcon kind="cspc" /> },
  { label: 'SPADA', w: 111, icon: <CrestIcon kind="spada" /> },
  { label: 'SIAK', w: 95, icon: <SiakIcon /> },
  { label: 'YouTube', w: 126, icon: <YoutubeIcon /> },
  { label: 'WhatsApp', w: 141, icon: <WaBadgeIcon /> },
  { label: 'DeepL', w: 112, icon: <DeeplIcon /> },
  { label: 'GCR', w: 92, icon: <ClassroomIcon /> },
  { label: 'Quillbot', w: 121, icon: <QuillbotIcon /> },
  { label: 'ChatGPT', w: 126, icon: <ChatGptTile><AiOutlineOpenAI size={20} /></ChatGptTile> },
  { label: 'Gmail', w: 104, icon: <GmailIcon /> },
  { label: 'Docs', w: 97, icon: <DocsIcon /> },
  { label: 'GitHub', w: 114, icon: <FaGithub size={24} color="#fff" /> },
  { label: 'Hospital Case Study...', w: 228, icon: <FigmaIcon /> },
  { label: 'Codepolitan', w: 171, icon: <CodepolitanIcon /> },
];

const labels = [
  { name: 'Yuehua Entertainment', h: 67, line: 53, iconTop: 17 },
  { name: 'Pledis Entertainment', h: 68, line: 53, iconTop: 17 },
  { name: 'JYP Entertainment', h: 67, line: 51, iconTop: 16 },
  { name: 'Belift Lab', h: 67, line: 53, iconTop: 16 },
  { name: 'Windfall', h: 67, line: 53, iconTop: 16 },
  { name: 'SM Entertainment', h: 67, line: 53, iconTop: 16 },
];

const DOT = '#e8e4e0';
const apps: { id: string; icon: React.ReactNode; dot?: string; dotW?: number; bg?: string; edge?: string; extra?: React.ReactNode }[] = [
  { id: 'copilot', icon: <CopilotIcon /> },
  { id: 'taskview', icon: <TaskViewIcon /> },
  { id: 'teams', icon: <TeamsIcon /> },
  { id: 'edge', icon: <EdgeIcon /> },
  { id: 'store', icon: <StoreIcon /> },
  { id: 'explorer', icon: <ExplorerIcon />, dot: DOT },
  { id: 'chrome', icon: <ChromeIcon /> },
  { id: 'notepad', icon: <NotepadIcon /> },
  {
    id: 'whatsapp',
    icon: <FaWhatsapp size={40} color="#27d366" />,
    dot: DOT,
    extra: <CountBadge $x={31} $y={11} $w={31} $bg="#d4b792">55</CountBadge>,
  },
  { id: 'spotify', icon: <SpotifyTile><FaSpotify size={36} /></SpotifyTile>, dot: DOT },
  { id: 'vscode', icon: <VscodeIcon /> },
  {
    id: 'chrome-profile',
    icon: <ChromeIcon />,
    dot: '#cfae80',
    dotW: 24,
    bg: 'rgba(255,255,255,0.06)',
    edge: 'rgba(255,255,255,0.1)',
    extra: <SmallAvatar />,
  },
  { id: 'xampp', icon: <XamppIcon s={36} />, dot: DOT },
  { id: 'obs', icon: <ObsTile><SiObsstudio size={29} /></ObsTile>, dot: DOT },
  { id: 'snip', icon: <SnipIcon />, dot: '#ff8f98', bg: '#472629' },
];

export default function App() {
  return (
    <Screen>
      <GlobalStyle />
      <TabStrip>
        <TabSearch><MdKeyboardArrowDown size={24} /></TabSearch>
        <Tab>
          <FaGithub size={24} color="#fff" />
          <TabTitle>faayyaa10/TP3DPBO2024C2</TabTitle>
          <TabClose><MdClose size={19} /></TabClose>
          <TabDivider />
        </Tab>
        <Tab>
          <DocsIcon />
          <TabTitle $fade>Modul 8 - PHP GUI - Google Do</TabTitle>
          <TabClose><MdClose size={19} /></TabClose>
          <TabDivider />
        </Tab>
        <Tab>
          <PmaIcon />
          <TabTitle $fade>localhost / 127.0.0.1 / db_album</TabTitle>
          <TabClose><MdClose size={19} /></TabClose>
        </Tab>
        <Tab $active>
          <XamppIcon />
          <TabTitle>Daftar Label</TabTitle>
          <TabClose><MdClose size={19} /></TabClose>
        </Tab>
        <NewTab><MdAdd size={25} /></NewTab>
        <WindowControls>
          <WindowButton>
            <svg width="16" height="16" viewBox="0 0 16 16"><path d="M0 7h16" stroke="#fff" strokeWidth="2" /></svg>
          </WindowButton>
          <WindowButton>
            <svg width="16" height="16" viewBox="0 0 16 16" fill="none" stroke="#fff" strokeWidth="1.600">
              <rect x="1" y="4" width="11" height="11" rx="2" />
              <path d="M4 1h7.500Q15 1 15 4.500V12" />
            </svg>
          </WindowButton>
          <WindowButton>
            <svg width="16" height="16" viewBox="0 0 16 16"><path d="M.5.5l15 15M15.500.5l-15 15" stroke="#fff" strokeWidth="1.700" /></svg>
          </WindowButton>
        </WindowControls>
      </TabStrip>

      <ToolbarBack>
        <Toolbar>
          <ToolButton $w={54}><MdArrowBack size={26} /></ToolButton>
          <ToolButton $w={54} $dim><MdArrowForward size={26} /></ToolButton>
          <ToolButton $w={54}><MdRefresh size={27} /></ToolButton>
          <Omnibox>
            <SiteInfo><MdInfoOutline size={25} color="#e6e6e6" /></SiteInfo>
            <Url><b>localhost</b>/TP3_Album/label.php</Url>
            <ToolButton $w={48}><MdGTranslate size={26} /></ToolButton>
            <ToolButton $w={48}><MdOutlineZoomOut size={29} /></ToolButton>
            <ToolButton $w={48}><MdStarOutline size={29} /></ToolButton>
          </Omnibox>
          <ToolButton $w={78}><ShieldIcon /></ToolButton>
          <ToolButton $w={32}><PuzzleIcon /></ToolButton>
          <ToolDivider />
          <ToolButton $w={78}><DownloadIcon /></ToolButton>
          <ToolButton $w={30}><Avatar /></ToolButton>
          <ToolButton $w={78}><MdMoreVert size={31} /></ToolButton>
        </Toolbar>
      </ToolbarBack>

      <Bookmarks>
        {bookmarks.map((b) => (
          <Bookmark key={b.label} $w={b.w}>{b.icon}<BookmarkLabel>{b.label}</BookmarkLabel></Bookmark>
        ))}
        <MdKeyboardDoubleArrowRight size={25} />
      </Bookmarks>

      <Viewport>
        <Page>
          <Navbar>
            <Brand><CampusLogo /></Brand>
            <NavLinks>
              <span>Home</span>
              <span>Tambah Label</span>
              <span>Daftar Musisi</span>
              <span>Daftar Label</span>
            </NavLinks>
            <SearchField>cari musisi</SearchField>
            <SearchButton>Cari</SearchButton>
          </Navbar>
          <Card>
            <CardHead>
              <Title>Daftar Label</Title>
              <AddButton>Tambah Label</AddButton>
            </CardHead>
            <Table>
              <HeadRow>
                <HeadCell>No.</HeadCell>
                <HeadCell>Nama Label</HeadCell>
                <HeadCell>Aksi</HeadCell>
              </HeadRow>
              {labels.map((l, i) => (
                <Row key={l.name} $h={l.h} $line={l.line}>
                  <Cell $bold>{i + 1}</Cell>
                  <Cell>{l.name}</Cell>
                  <ActionCell $top={l.iconTop}>
                    <BsPencilSquare size={30} color="#ffc107" />
                    <BsTrashFill size={30} color="#dc3545" />
                  </ActionCell>
                </Row>
              ))}
            </Table>
          </Card>
        </Page>
        <Scrollbar>
          <Arrow />
          <Thumb />
          <Arrow $down />
        </Scrollbar>
      </Viewport>

      <Taskbar>
        <Wallpaper width="1920" height="72" viewBox="0 0 1920 72">
          <defs>
            <filter id="soft"><feGaussianBlur stdDeviation="1.200" /></filter>
          </defs>
          <g filter="url(#soft)">
            <path d="M126 0h9l3 20 11 10v42h-8V34l-12-14z" fill="#2b201d" />
            <path d="M420 72q2-46 20-62 12-6 20 18 8 14 8 44z" fill="#8f857f" opacity=".75" />
            <path d="M456 0h8q10 30 28 72h-14q-4-40-22-72z" fill="#7a5640" opacity=".8" />
            <path d="M1350 0h35l12 72h-22z" fill="#241818" />
            <path d="M1318 0h34l8 72q-10-40-42-72z" fill="#8a6045" opacity=".7" />
          </g>
        </Wallpaper>
        <Weather>
          <CloudIcon />
          <CountBadge $x={31} $y={-12} $w={24} $bg="#ff9aa2">1</CountBadge>
        </Weather>
        <StartButton><WindowsIcon /></StartButton>
        <SearchPill>
          <MagnifierIcon />
          <PillLabel>Search</PillLabel>
          <FlowersIcon />
        </SearchPill>
        {apps.map((a) => (
          <AppSlot key={a.id}>
            <AppTile $bg={a.bg} $edge={a.edge}>{a.icon}</AppTile>
            {a.extra}
            {a.dot && <Indicator $w={a.dotW ?? 9} $c={a.dot} />}
          </AppSlot>
        ))}
        <Tray>
          <TrayItem $gap={35}>
            <svg width="16" height="10" viewBox="0 0 16 10"><path d="M1 9l7-7.500L15 9" fill="none" stroke="#fff" strokeWidth="2" /></svg>
          </TrayItem>
          <TrayItem $gap={32}><MicIcon /></TrayItem>
          <TrayItem $gap={26}><WifiIcon /></TrayItem>
          <TrayItem $gap={12}><VolumeIcon /></TrayItem>
          <TrayItem $gap={12}><BatteryIcon /></TrayItem>
          <Clock>17:36<br />03/05/2024</Clock>
          <TrayItem $gap={13}><BellIcon /></TrayItem>
        </Tray>
      </Taskbar>
    </Screen>
  );
}
